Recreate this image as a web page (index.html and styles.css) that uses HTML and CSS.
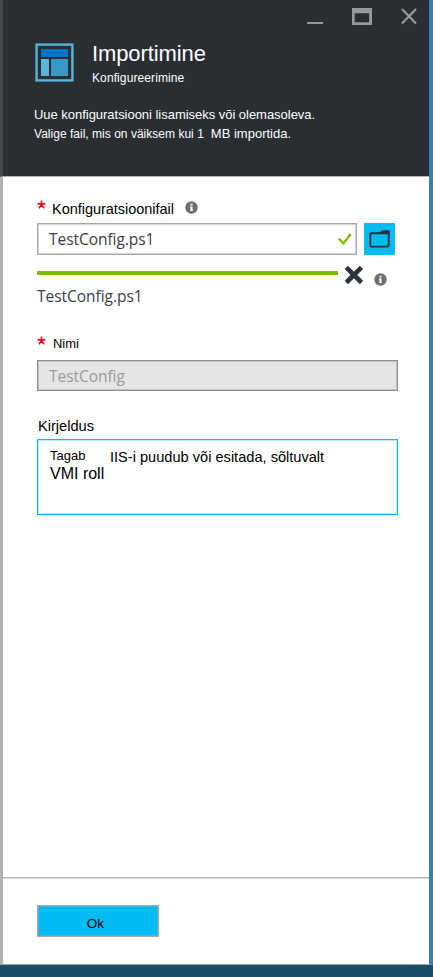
FILE: index.html
```html
<!DOCTYPE html>
<html lang="et">
<head>
<meta charset="utf-8">
<title>Importimine</title>
<link rel="stylesheet" href="styles.css">
</head>
<body>
<div class="blade">
  <header class="header">
    <div class="controls">
      <svg class="minimize" width="16" height="17" viewBox="0 0 16 17"><path d="M0 14h16v2H0z" fill="#97999b"/></svg>
      <svg class="maximize" width="20" height="17" viewBox="0 0 20 17"><path fill-rule="evenodd" d="M0 0h20v17H0zM2.7 5.2v9h14.4v-9z" fill="#97999b"/></svg>
      <svg width="16" height="17" viewBox="0 0 16 17"><path d="M1 1l14 14.6M15 1L1 15.6" stroke="#97999b" stroke-width="2.2" fill="none"/></svg>
    </div>
    <div class="heading">
      <svg width="39" height="39" viewBox="0 0 39 39">
        <rect x="1.6" y="1.6" width="35.8" height="35.8" fill="none" stroke="#59b4d9" stroke-width="2.4"/>
        <path d="M6 6h27v8H6z" fill="#0072c6"/>
        <path d="M6 16h8v17H6z" fill="#59b4d9"/>
        <path d="M16 16h17v17H16z" fill="#3999c6"/>
      </svg>
      <div class="titles">
        <h1 class="title">Importimine</h1>
        <div class="subtitle">Konfigureerimine</div>
      </div>
    </div>
    <div class="intro intro-first">Uue konfiguratsiooni lisamiseks või olemasoleva.</div>
    <div class="intro intro-limit"><span class="intro-small">Valige fail, mis on väiksem kui 1</span><span>MB importida.</span></div>
  </header>

  <main class="form">
    <div class="label-row">
      <svg class="star" width="9" height="9" viewBox="0 0 9 9"><path d="M4.5 4.6V.4M4.5 4.6L.6 3.4M4.5 4.6l3.9-1.2M4.5 4.6L2 8.2M4.5 4.6L7 8.2" stroke="#e81123" stroke-width="1.7"/></svg>
      <span class="label">Konfiguratsioonifail</span>
      <svg class="info" width="13" height="13" viewBox="0 0 13 13"><circle cx="6.5" cy="6.5" r="6.2" fill="#6d6f74"/><path d="M5.5 2.8h2v1.8h-2zM5 5.5h2.5v3.8H8v.8H5v-.8h.5V6.4H5z" fill="#fff"/></svg>
    </div>
    <div class="file-row">
      <div class="field file-field">
        <span>TestConfig.ps1</span>
        <svg width="14" height="12" viewBox="0 0 14 12"><path d="M.8 5.6l4.6 4.6L12.8 1" fill="none" stroke="#7fba00" stroke-width="2.3"/></svg>
      </div>
      <div class="browse">
        <svg width="21" height="18" viewBox="0 0 21 18"><path d="M1.3 4.4Q1.3 3.3 2.4 3.3H19.7V15.2Q19.7 16.6 18.3 16.6H2.7Q1.3 16.6 1.3 15.2z" fill="none" stroke="#2b333c" stroke-width="1.9"/><path d="M10 4l2.2-3.2Q12.6.2 13.3.2h6q1.5 0 1.5 1.5V4z" fill="#2b333c"/></svg>
      </div>
    </div>
    <div class="progress-row">
      <div class="bar"></div>
      <svg class="cancel" width="20" height="20" viewBox="0 0 20 20"><path d="M2.3 2.3l15.2 15.2M17.5 2.3L2.3 17.5" stroke="#2b333c" stroke-width="4.6"/></svg>
      <svg class="progress-info" width="13" height="13" viewBox="0 0 13 13"><circle cx="6.5" cy="6.5" r="6.2" fill="#6d6f74"/><path d="M5.5 2.8h2v1.8h-2zM5 5.5h2.5v3.8H8v.8H5v-.8h.5V6.4H5z" fill="#fff"/></svg>
    </div>
    <div class="file-name">TestConfig.ps1</div>

    <div class="label-row name-label">
      <svg class="star" width="9" height="9" viewBox="0 0 9 9"><path d="M4.5 4.6V.4M4.5 4.6L.6 3.4M4.5 4.6l3.9-1.2M4.5 4.6L2 8.2M4.5 4.6L7 8.2" stroke="#e81123" stroke-width="1.7"/></svg>
      <span class="label">Nimi</span>
    </div>
    <div class="field name-field">TestConfig</div>

    <div class="description-label">Kirjeldus</div>
    <div class="description">
      <div class="description-line"><span class="lead">Tagab</span><span>IIS-i puudub või esitada, sõltuvalt</span></div>
      <div class="role">VMI roll</div>
    </div>
  </main>

  <footer class="footer">
    <div class="ok">Ok</div>
  </footer>
</div>
</body>
</html>
```
FILE: styles.css
```css
* { box-sizing: border-box; }

body {
  margin: 0;
  height: 977px;
  overflow: hidden;
  background: #1c4d66;
  font-family: "Liberation Sans", Arial, sans-serif;
  color: #000;
}

svg { display: block; flex: none; }

.blade {
  display: flex;
  flex-direction: column;
  height: 965px;
  border-right: 4px solid #3781a8;
  border-bottom: 1px solid #a3a3a3;
  background: #fff;
}

.header {
  height: 177px;
  border-left: 3px solid #44494d;
  border-bottom: 1px solid #b3b3b3;
  background: #292e32;
  color: #fff;
}

.controls {
  display: flex;
  justify-content: flex-end;
  height: 43px;
  padding: 8px 12px 0 0;
}
.minimize { margin-right: 29px; }
.maximize { margin-right: 29px; }

.heading { display: flex; padding-left: 32px; height: 61px; }
.titles { margin-left: 18px; }
.title {
  margin: 0;
  font-size: 22px;
  font-weight: normal;
  line-height: 22px;
  letter-spacing: -0.1px;
}
.subtitle {
  margin-top: 5px;
  font-size: 12px;
  line-height: 16px;
  letter-spacing: 0.1px;
}

.intro {
  padding-left: 31px;
  font-size: 13px;
  line-height: 20px;
  white-space: nowrap;
}
.intro-first { line-height: 21px; letter-spacing: -0.03px; }
.intro-limit { display: flex; align-items: baseline; gap: 7px; line-height: 18px; }
.intro-small { font-size: 12px; letter-spacing: 0.02px; }

.form {
  flex: 1;
  padding: 20px 0 0 34px;
  border-left: 3px solid #b3b3b3;
}

.label-row { display: flex; height: 26px; }
.star { margin-top: 3px; }
.label { margin-left: 6px; font-size: 14.5px; line-height: 24px; letter-spacing: -0.03px; }
.info { margin: 4px 0 0 11px; }

.file-row { display: flex; gap: 7px; }
.field {
  display: flex;
  align-items: center;
  height: 32px;
  padding: 0 4px 0 11px;
  border: 1px solid #a5a5a5;
  box-shadow: inset 0 0 0 1px #d4d4d4;
  font-family: "Open Sans", "Noto Sans", sans-serif;
  font-size: 15.5px;
  letter-spacing: -0.05px;
  color: #3b4046;
}
.file-field { width: 320px; justify-content: space-between; }
.browse {
  display: grid;
  place-items: center;
  width: 31px;
  height: 32px;
  background: #00bcf2;
}

.progress-row { display: flex; height: 33px; }
.bar { width: 301px; height: 4px; margin-top: 16px; background: #7fba00; }
.cancel { margin: 10px 0 0 6px; }
.progress-info { margin: 18px 0 0 10px; }
.file-name {
  height: 46px;
  font-family: "Open Sans", "Noto Sans", sans-serif;
  font-size: 15.5px;
  letter-spacing: -0.03px;
  line-height: 16px;
  color: #3b4046;
}

.name-label .star { margin-top: 2px; }
.name-label .label { margin-left: 7px; font-size: 13px; line-height: 19px; }
.name-field {
  width: 361px;
  height: 31px;
  border-color: #8d8d8d;
  box-shadow: inset 0 0 0 1px #c6c6c6;
  background: #e5e5e5;
  color: #999b9d;
}

.description-label {
  height: 48px;
  padding: 25px 0 0 1px;
  font-size: 14.6px;
  line-height: 20px;
}
.description {
  width: 361px;
  height: 76px;
  padding: 7px 0 0 12px;
  border: 1px solid #00bcf2;
  box-shadow: inset 0 0 0 1px #b5ebfb;
}
.description-line { display: flex; height: 18px; font-size: 14.6px; line-height: 20px; white-space: nowrap; }
.lead { width: 60px; font-size: 13px; line-height: 17px; }
.role { font-size: 16px; line-height: 18px; }

.footer {
  height: 87px;
  padding: 28px 0 0 34px;
  border-left: 3px solid #b3b3b3;
  background: linear-gradient(#b0b0b0 0 1px, #dedede 1px 2px, #fff 2px);
}
.ok {
  width: 122px;
  height: 32px;
  padding-right: 5px;
  border: 1px solid #a9a9a9;
  box-shadow: inset 0 0 0 1px #3fb6da;
  background: #00bcf2;
  font-size: 13.5px;
  line-height: 35px;
  text-align: center;
}
```
